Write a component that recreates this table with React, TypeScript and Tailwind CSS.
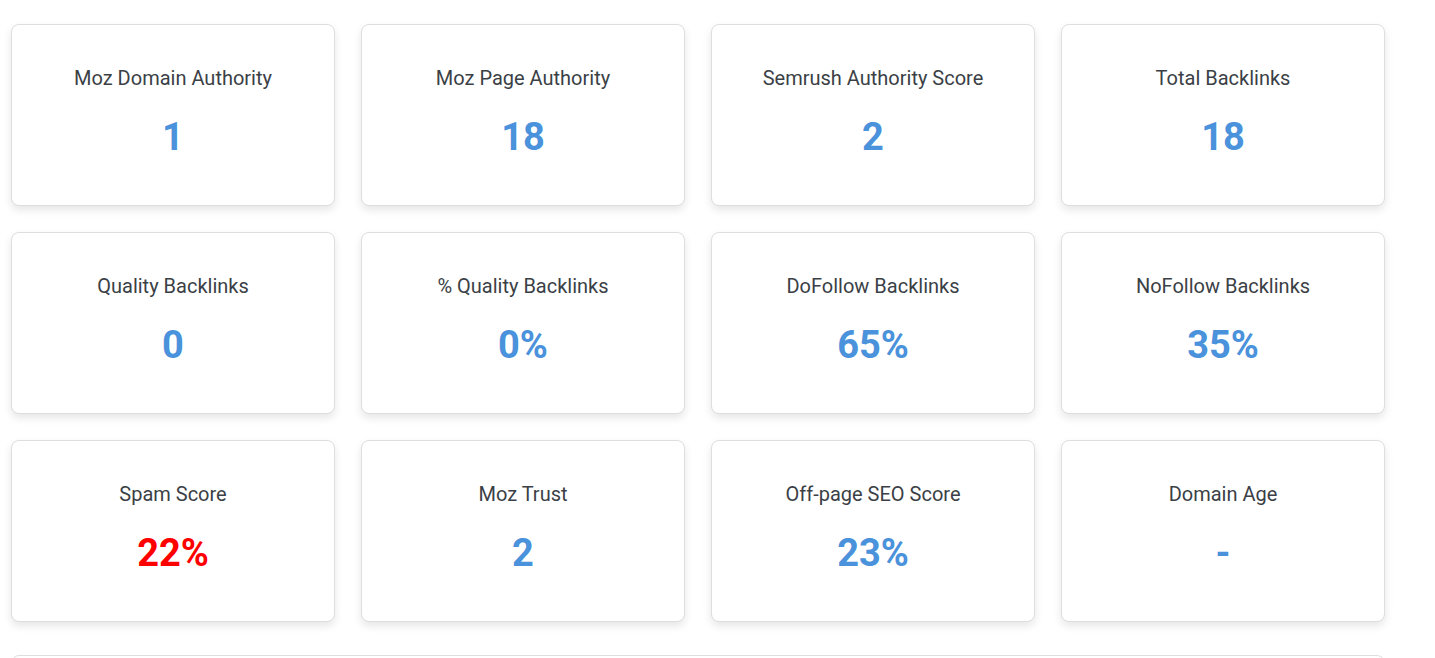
const stats: Array<{ label: string; value: string; danger?: boolean }> = [
  { label: "Moz Domain Authority", value: "1" },
  { label: "Moz Page Authority", value: "18" },
  { label: "Semrush Authority Score", value: "2" },
  { label: "Total Backlinks", value: "18" },
  { label: "Quality Backlinks", value: "0" },
  { label: "% Quality Backlinks", value: "0%" },
  { label: "DoFollow Backlinks", value: "65%" },
  { label: "NoFollow Backlinks", value: "35%" },
  { label: "Spam Score", value: "22%", danger: true },
  { label: "Moz Trust", value: "2" },
  { label: "Off-page SEO Score", value: "23%" },
  { label: "Domain Age", value: "-" },
];

export default function App() {
  return (
    <main className="min-h-screen bg-white font-['Roboto',sans-serif]">
      <div className="w-[1385px] pl-[11px] pt-6">
        <div className="grid grid-cols-4 gap-[26px]">
          {stats.map((s) => (
            <div
              key={s.label}
              className="flex h-[182px] flex-col items-center rounded-lg border border-[#dedede] bg-white pt-[41px] shadow-[0_4px_8px_rgba(0,0,0,0.1)]"
            >
              <div className="text-[20px] leading-6 text-[#3b3f46]">{s.label}</div>
              <div
                className={
                  s.danger
                    ? "mt-[27px] text-[38px] font-bold leading-[40px] text-[#ff0000]"
                    : "mt-[27px] text-[38px] font-bold leading-[40px] text-[#4a92db]"
                }
              >
                {s.value}
              </div>
            </div>
          ))}
        </div>
        <div className="mt-[33px] h-[40px] rounded-lg border border-[#dedede] bg-white" />
      </div>
    </main>
  );
}
